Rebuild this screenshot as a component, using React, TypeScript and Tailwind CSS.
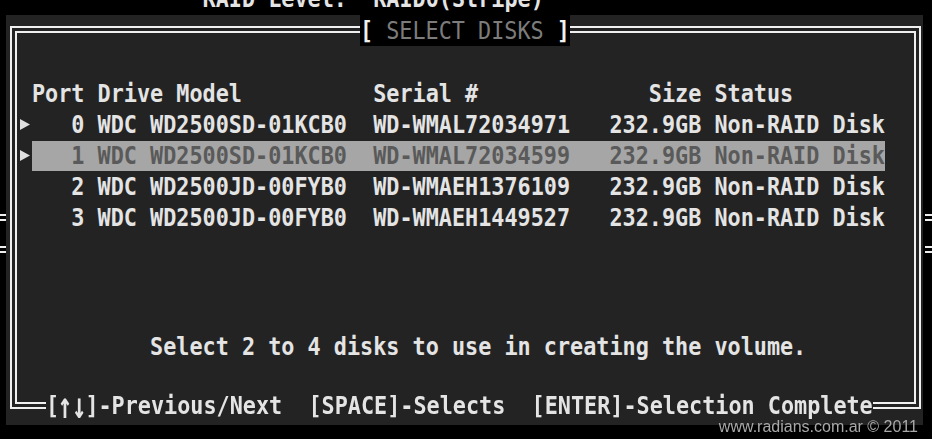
import React from 'react'

const mono = { fontFamily: '"DejaVu Sans Mono", "Liberation Mono", monospace' }

const disks = [
    { port: '0', model: 'WDC WD2500SD-01KCB0', serial: 'WD-WMAL72034971', size: '232.9GB', status: 'Non-RAID Disk', marked: true, active: false },
    { port: '1', model: 'WDC WD2500SD-01KCB0', serial: 'WD-WMAL72034599', size: '232.9GB', status: 'Non-RAID Disk', marked: true, active: true },
    { port: '2', model: 'WDC WD2500JD-00FYB0', serial: 'WD-WMAEH1376109', size: '232.9GB', status: 'Non-RAID Disk', marked: false, active: false },
    { port: '3', model: 'WDC WD2500JD-00FYB0', serial: 'WD-WMAEH1449527', size: '232.9GB', status: 'Non-RAID Disk', marked: false, active: false },
]

const Txt = ({ children, className = '' }: { children: React.ReactNode; className?: string }) => (
    <span className={`inline-block whitespace-pre scale-y-[1.15] ${className}`}>{children}</span>
)

const Marks = () => (
    <div className="flex flex-col pt-[199px]">
        <div className="h-[2px] bg-[#eeeeee]" />
        <div className="h-[2px] bg-[#eeeeee] mt-[3px]" />
        <div className="h-[2px] bg-[#eeeeee] mt-[25px]" />
        <div className="h-[2px] bg-[#eeeeee] mt-[3px]" />
    </div>
)

const App = () => {
    return (
        <div className="relative w-[932px] h-[439px] overflow-hidden bg-black text-[21.8px] font-bold text-[#e4e4e4]" style={mono}>
            {/* window behind, mostly hidden */}
            <div className="flow-root h-[15px]">
                <div className="-mt-[17px] pl-[32px] h-[31px] leading-[31px]">
                    <Txt>{'             RAID Level:  RAID0(Stripe)'}</Txt>
                </div>
            </div>

            <div className="flex">
                <div className="w-[6px]">
                    <Marks />
                </div>

                {/* panel */}
                <div className="relative w-[917px] h-[410px] bg-[#232323] flex flex-col pt-[11px] pl-[4px] pr-[2px] pb-[16px]">
                    <div className="flex-1 flex border-2 border-[#f0f0f0] p-[3px]">
                        <div className="flex-1 border-2 border-[#f0f0f0] pt-[45px]">
                            <div className="flex h-[31px] leading-[31px]">
                                <div className="w-[15px]" />
                                <Txt>{'Port Drive Model          Serial #             Size Status'}</Txt>
                            </div>

                            {disks.map((d) => (
                                <div key={d.port} className="flex items-center h-[31px]">
                                    <div className="w-[15px] pl-[3px] flex items-center">
                                        {d.marked && (
                                            <svg width="10" height="11" viewBox="0 0 10 11">
                                                <polygon points="0,0 10,5.5 0,11" fill="#e0e0e0" />
                                            </svg>
                                        )}
                                    </div>
                                    <div
                                        className={`h-[30px] leading-[30px] ${d.active ? 'bg-[#a6a6a6] text-[#5a5a5a]' : ''}`}
                                    >
                                        <Txt>{`   ${d.port} ${d.model}  ${d.serial}   ${d.size} ${d.status}`}</Txt>
                                    </div>
                                </div>
                            ))}

                            <div className="flex h-[31px] leading-[31px] mt-[98px]">
                                <div className="w-[15px]" />
                                <Txt>{'         Select 2 to 4 disks to use in creating the volume.'}</Txt>
                            </div>
                        </div>
                    </div>

                    {/* title over the top border */}
                    <div className="absolute left-[354px] top-0 h-[31px] leading-[31px] bg-black">
                        <Txt>
                            <span className="text-[#f0f0f0]">[ </span>
                            <span className="text-[#7c7c7c] font-normal">SELECT DISKS</span>
                            <span className="text-[#f0f0f0]"> ]</span>
                        </Txt>
                    </div>

                    {/* key help over the bottom border */}
                    <div className="absolute left-[40px] top-[375px] h-[31px] leading-[31px] bg-[#232323]">
                        <Txt>
                            [<span className="inline-block scale-y-[1.45] scale-x-[1.1]">↑↓</span>
                            {']-Previous/Next  [SPACE]-Selects  [ENTER]-Selection Complete'}
                        </Txt>
                    </div>
                </div>

                <div className="w-[7px] ml-[2px]">
                    <Marks />
                </div>
            </div>

            <div
                className="absolute right-[14px] top-[417px] text-[16px] leading-[20px] font-normal text-[#a8a8a8]"
                style={{ fontFamily: '"Liberation Sans", Arial, sans-serif' }}
            >
                www.radians.com.ar © 2011
            </div>
        </div>
    )
}

export default App
